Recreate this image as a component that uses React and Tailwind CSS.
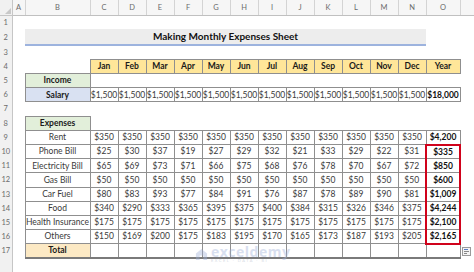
const months = ['Jan', 'Feb', 'Mar', 'Apr', 'May', 'Jun', 'Jul', 'Aug', 'Sep', 'Oct', 'Nov', 'Dec'];
const letters = ['A', 'B', 'C', 'D', 'E', 'F', 'G', 'H', 'I', 'J', 'K', 'L', 'M', 'N', 'O'];

const expenses = [
  { label: 'Rent', values: [350, 350, 350, 350, 350, 350, 350, 350, 350, 350, 350, 350], total: '$4,200' },
  { label: 'Phone Bill', values: [25, 30, 37, 19, 27, 29, 32, 21, 33, 29, 22, 31], total: '$335' },
  { label: 'Electricity Bill', values: [65, 69, 73, 71, 66, 75, 68, 76, 78, 70, 67, 72], total: '$850' },
  { label: 'Gas Bill', values: [50, 50, 50, 50, 50, 50, 50, 50, 50, 50, 50, 50], total: '$600' },
  { label: 'Car Fuel', values: [80, 83, 93, 77, 84, 91, 76, 87, 78, 89, 90, 81], total: '$1,009' },
  { label: 'Food', values: [340, 290, 333, 365, 395, 375, 400, 384, 315, 326, 346, 375], total: '$4,244' },
  { label: 'Health Insurance', values: [175, 175, 175, 175, 175, 175, 175, 175, 175, 175, 175, 175], total: '$2,100' },
  { label: 'Others', values: [150, 169, 200, 175, 183, 195, 170, 165, 173, 187, 193, 205], total: '$2,165' },
];

const cell = 'border border-[#8f8f8f] text-center p-0 leading-none';
const rowHead = 'bg-[#f1f1f1] border-r border-[#c6c6c6] text-[#6b6b6b] text-[7.5px] text-center p-0';

const RowNum = ({ n }) => <td className={rowHead}>{n}</td>;

export default function App() {
  return (
    <div className="relative w-[474px] h-[272px] overflow-hidden bg-white text-[#3a3a3a]" style={{ fontFamily: 'Lato, "Open Sans", sans-serif' }}>
      <table className="table-fixed border-collapse text-[8.5px]">
        <colgroup>
          <col className="w-[12px]" />
          <col className="w-[13px]" />
          <col className="w-[65px]" />
          {months.map(m => <col key={m} className="w-[28px]" />)}
          <col className="w-[34px]" />
          <col className="w-[14px]" />
        </colgroup>
        <tbody>
          {/* column letters */}
          <tr className="h-[15px] bg-[#f6f6f6]">
            <td className="relative border-r border-b border-[#c6c6c6] bg-[#f1f1f1] p-0">
              <span className="absolute right-[1px] bottom-[1px] w-0 h-0 border-l-[6px] border-l-transparent border-b-[6px] border-b-[#c8c8c8]" />
            </td>
            {letters.map(l => (
              <td key={l} className="border-r border-b border-[#d4d4d4] border-b-[#c0c0c0] text-center text-[7.5px] text-[#6b6b6b] p-0">{l}</td>
            ))}
            <td className="border-b border-[#c0c0c0] p-0" />
          </tr>

          <tr className="h-[14.2px]"><RowNum n={1} /><td colSpan={15} /></tr>

          <tr className="h-[14.2px]">
            <RowNum n={2} />
            <td />
            <td colSpan={13} className="bg-[#ededed] border-b-2 border-[#9db3de] text-center font-bold text-[10px] text-[#111] p-0">
              Making Monthly Expenses Sheet
            </td>
            <td />
          </tr>

          <tr className="h-[14.2px]"><RowNum n={3} /><td colSpan={15} /></tr>

          <tr className="h-[14.2px]">
            <RowNum n={4} />
            <td /><td />
            {[...months, 'Year'].map(m => (
              <td key={m} className={`${cell} bg-[#ffe699] font-bold text-[#1a1a1a]`}>{m}</td>
            ))}
            <td />
          </tr>

          <tr className="h-[14.2px]">
            <RowNum n={5} />
            <td />
            <td className={`${cell} bg-[#e2efda] font-bold text-[#1a1a1a]`}>Income</td>
            <td colSpan={14} />
          </tr>

          <tr className="h-[14.2px]">
            <RowNum n={6} />
            <td />
            <td className={`${cell} bg-[#d9e1f2] font-bold text-[#1a1a1a]`}>Salary</td>
            {months.map(m => <td key={m} className={cell}>$1,500</td>)}
            <td className={`${cell} font-bold text-[#111]`}>$18,000</td>
            <td />
          </tr>

          <tr className="h-[14.2px]"><RowNum n={7} /><td colSpan={15} /></tr>

          <tr className="h-[14.2px]">
            <RowNum n={8} />
            <td />
            <td className={`${cell} bg-[#e2efda] font-bold text-[#1a1a1a]`}>Expenses</td>
            <td colSpan={14} />
          </tr>

          {expenses.map((e, i) => {
            const red = i > 0;
            const yearCls = red
              ? `border-x-2 border-x-[#d0021b] ${i === 1 ? 'border-t-2 border-t-[#d0021b]' : ''} ${i === expenses.length - 1 ? 'border-b-2 border-b-[#d0021b]' : ''}`
              : '';
            return (
              <tr key={e.label} className="h-[14.2px]">
                <RowNum n={9 + i} />
                <td />
                <td className={`${cell} whitespace-nowrap`}>{e.label}</td>
                {e.values.map((v, j) => <td key={j} className={cell}>${v}</td>)}
                <td className={`${cell} ${yearCls} font-bold text-[#111]`}>{e.total}</td>
                <td />
              </tr>
            );
          })}

          <tr className="h-[14.2px]">
            <RowNum n={17} />
            <td />
            <td className={`${cell} border-b-2 border-b-[#7a7a7a] bg-[#fce9c4] font-bold text-[#1a1a1a]`}>Total</td>
            {[...months, 'Year'].map(m => <td key={m} className={`${cell} border-b-2 border-b-[#7a7a7a]`} />)}
            <td />
          </tr>

          <tr className="h-[16px]"><td className={rowHead} /><td colSpan={15} /></tr>
        </tbody>
      </table>

      {/* watermark */}
      <div className="absolute left-[195px] top-[245px] flex items-center gap-[3px] opacity-40 pointer-events-none">
        <svg width="13" height="13" viewBox="0 0 14 14">
          <path d="M1 13V6l6-5 6 5v7H9V8H5v5z" fill="#9fb1d8" />
        </svg>
        <div className="flex flex-col leading-none">
          <span className="text-[14px] font-bold text-[#9fb1d8] tracking-[0.5px]" style={{ fontFamily: '"Open Sans", Lato, sans-serif' }}>exceldemy</span>
          <span className="text-[4px] text-[#9aa5b8] tracking-[1.5px]">EXCEL · DATA · BI</span>
        </div>
      </div>

      {/* quick analysis icon */}
      <div className="absolute left-[462px] top-[247px] w-[9px] h-[9px] border border-[#9a9a9a] bg-[#f4f4f4] flex flex-col justify-center gap-[1px] px-[1px]">
        <span className="h-px w-[4px] bg-[#5b7fc4]" />
        <span className="h-px w-[5px] bg-[#888]" />
        <span className="h-px w-[3px] bg-[#888]" />
      </div>
    </div>
  );
}
